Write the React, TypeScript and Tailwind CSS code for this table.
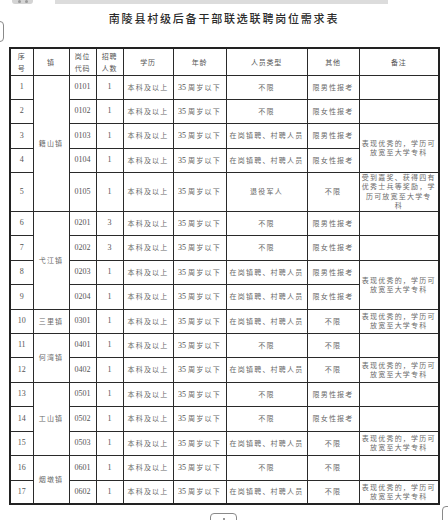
import React from "react";

type Remark = { span: number; lines: string[] };
type Row = {
  no: string;
  town?: { name: string; span: number };
  code: string;
  num: string;
  type: string;
  other: string;
  remark?: Remark;
  h: string;
};

const ZG = "在岗镇聘、村聘人员";
const R = ["表现优秀的，学历可", "放宽至大学专科"];
const E: Remark = { span: 1, lines: [] };

const rows: Row[] = [
  { no: "1", town: { name: "籍山镇", span: 5 }, code: "0101", num: "1", type: "不限", other: "限男性报考", remark: E, h: "h-[24px]" },
  { no: "2", code: "0102", num: "1", type: "不限", other: "限女性报考", remark: E, h: "h-[24px]" },
  { no: "3", code: "0103", num: "1", type: ZG, other: "限男性报考", remark: { span: 2, lines: R }, h: "h-[25px]" },
  { no: "4", code: "0104", num: "1", type: ZG, other: "限女性报考", h: "h-[24px]" },
  { no: "5", code: "0105", num: "1", type: "退役军人", other: "不限", remark: { span: 1, lines: ["受到嘉奖、获得四有", "优秀士兵等奖励，学", "历可放宽至大学专", "科"] }, h: "h-[39px]" },
  { no: "6", town: { name: "弋江镇", span: 4 }, code: "0201", num: "3", type: "不限", other: "限男性报考", remark: E, h: "h-[24px]" },
  { no: "7", code: "0202", num: "3", type: "不限", other: "限女性报考", remark: E, h: "h-[25px]" },
  { no: "8", code: "0203", num: "1", type: ZG, other: "限男性报考", remark: { span: 2, lines: R }, h: "h-[24px]" },
  { no: "9", code: "0204", num: "1", type: ZG, other: "限女性报考", h: "h-[25px]" },
  { no: "10", town: { name: "三里镇", span: 1 }, code: "0301", num: "1", type: ZG, other: "不限", remark: { span: 1, lines: R }, h: "h-[24px]" },
  { no: "11", town: { name: "何湾镇", span: 2 }, code: "0401", num: "1", type: "不限", other: "不限", remark: E, h: "h-[24px]" },
  { no: "12", code: "0402", num: "1", type: ZG, other: "不限", remark: { span: 1, lines: R }, h: "h-[25px]" },
  { no: "13", town: { name: "工山镇", span: 3 }, code: "0501", num: "1", type: "不限", other: "限男性报考", remark: E, h: "h-[24px]" },
  { no: "14", code: "0502", num: "1", type: "不限", other: "限女性报考", remark: E, h: "h-[25px]" },
  { no: "15", code: "0503", num: "1", type: ZG, other: "不限", remark: { span: 1, lines: R }, h: "h-[24px]" },
  { no: "16", town: { name: "烟墩镇", span: 2 }, code: "0601", num: "1", type: "不限", other: "不限", remark: E, h: "h-[25px]" },
  { no: "17", code: "0602", num: "1", type: ZG, other: "不限", remark: { span: 1, lines: R }, h: "h-[24px]" },
];

const td = "border border-[#2a2a2a] p-0 text-center align-middle text-[7px] leading-[8px]";
const cjk = "font-['Noto_Sans_CJK_SC',sans-serif] text-[7px] leading-[8px] text-[#6a6a6a] tracking-[1.2px] whitespace-nowrap";
const num = "font-['Liberation_Serif',serif] text-[8px] leading-[8px] text-[#555]";
const head = "font-['Noto_Sans_CJK_SC',sans-serif] text-[7px] text-[#555] tracking-[0.8px] leading-[12px]";

export default function App() {
  return (
    <div className="relative w-[448px] h-[520px] overflow-hidden bg-white">
      {/* top toolbar remnants */}
      <div className="flex h-[4px]">
        <div className="ml-[12px] w-[21px] h-[4px] rounded-b-[3px] bg-[#d4d4d4] flex items-start justify-center gap-[4px]">
          <div className="w-[3px] h-[3px] rounded-full bg-[#9a9a9a]" />
          <div className="w-[3px] h-[3px] rounded-full bg-[#9a9a9a]" />
        </div>
        <div className="ml-[22px] w-[333px] h-[4px] bg-[#dcdcdc]" />
      </div>

      {/* title */}
      <div className="mt-[9px] h-[11px] text-center font-['Noto_Sans_CJK_SC',sans-serif] text-[11px] leading-[11px] font-medium text-[#2a2a2a] tracking-[1.8px]">
        南陵县村级后备干部联选联聘岗位需求表
      </div>

      {/* table */}
      <table className="mt-[23px] ml-[9px] w-[429px] table-fixed border-collapse border-2 border-[#222]">
        <colgroup>
          <col className="w-[23px]" />
          <col className="w-[36px]" />
          <col className="w-[27px]" />
          <col className="w-[27px]" />
          <col className="w-[50px]" />
          <col className="w-[53px]" />
          <col className="w-[81px]" />
          <col className="w-[52px]" />
          <col className="w-[80px]" />
        </colgroup>
        <tbody>
          <tr className="h-[27px]">
            <td className={td}><div className={head}>序<br />号</div></td>
            <td className={td}><div className={head}>镇</div></td>
            <td className={td}><div className={head}>岗位<br />代码</div></td>
            <td className={td}><div className={head}>招聘<br />人数</div></td>
            <td className={td}><div className={head}>学历</div></td>
            <td className={td}><div className={head}>年龄</div></td>
            <td className={td}><div className={head}>人员类型</div></td>
            <td className={td}><div className={head}>其他</div></td>
            <td className={td}><div className={head}>备注</div></td>
          </tr>
          {rows.map((r) => (
            <tr key={r.no} className={r.h}>
              <td className={td}><span className={num}>{r.no}</span></td>
              {r.town && (
                <td className={td} rowSpan={r.town.span}>
                  <span className={cjk}>{r.town.name}</span>
                </td>
              )}
              <td className={td}><span className={num}>{r.code}</span></td>
              <td className={td}><span className={num}>{r.num}</span></td>
              <td className={td}><span className={cjk}>本科及以上</span></td>
              <td className={td}>
                <span className={num}>35</span>
                <span className={cjk + " ml-[2px]"}>周岁以下</span>
              </td>
              <td className={td}>
                <span className={r.type === ZG ? cjk + " tracking-[0.5px]" : cjk}>{r.type}</span>
              </td>
              <td className={td}><span className={cjk}>{r.other}</span></td>
              {r.remark && (
                <td className={td} rowSpan={r.remark.span}>
                  <div className={cjk + (r.remark.lines.length > 2 ? " leading-[9.5px]" : " leading-[9px]")}>
                    {r.remark.lines.map((l, i) => (
                      <div key={i}>{l}</div>
                    ))}
                  </div>
                </td>
              )}
            </tr>
          ))}
        </tbody>
      </table>

      {/* floating widgets at edges */}
      <div className="absolute left-[-20px] top-[21px] w-[24px] h-[21px] rounded-[4px] border border-[#8a8a8a] bg-white" />
      <div className="absolute left-[210px] top-[513px] w-[27px] h-[16px] rounded-[4px] border border-[#8a8a8a] bg-white flex justify-center pt-[4px]">
        <div className="w-[2px] h-[2px] rounded-full bg-[#777]" />
      </div>
      <div className="absolute left-[442px] top-[506px] w-[20px] h-[20px] rounded-[4px] border border-[#8a8a8a] bg-white" />
    </div>
  );
}
